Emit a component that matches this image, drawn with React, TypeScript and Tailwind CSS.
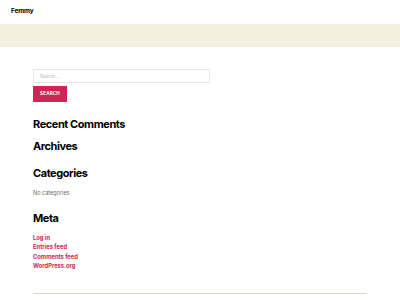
export default function App() {
  const links = ['Log in', 'Entries feed', 'Comments feed', 'WordPress.org'];
  return (
    <div className="flex h-[300px] w-[400px] flex-col overflow-hidden bg-white font-['Inter',sans-serif] text-black">
      <header className="flex h-[24px] items-center px-[11px]">
        <span className="text-[6.5px] font-bold tracking-[-0.02em] text-black">Femmy</span>
      </header>
      <div className="h-[23px] bg-[#f5efe0]" />

      <main className="flex flex-col px-[33px] pt-[22px]">
        <form className="flex flex-col gap-[3px]">
          <input
            placeholder="Search ..."
            className="h-[14px] w-[177px] border border-[#e6e6e6] px-[6px] text-[4.5px] text-[#999] outline-none placeholder:text-[#b0b0b0]"
          />
          <button
            type="button"
            className="h-[16px] w-[34px] bg-[#cd2653] text-[4.5px] font-bold uppercase tracking-[0.04em] text-white"
          >
            Search
          </button>
        </form>

        <h2 className="mt-[15px] text-[11px] font-bold leading-[15px] tracking-[-0.04em]">Recent Comments</h2>
        <h2 className="mt-[7px] text-[11px] font-bold leading-[15px] tracking-[-0.04em]">Archives</h2>
        <h2 className="mt-[12px] text-[11px] font-bold leading-[15px] tracking-[-0.04em]">Categories</h2>
        <p className="mt-[8px] text-[5.5px] leading-[8px] text-[#6d6d6d]">No categories</p>
        <h2 className="mt-[14px] text-[11px] font-bold leading-[15px] tracking-[-0.04em]">Meta</h2>
        <ul className="mt-[7px] flex flex-col">
          {links.map((l) => (
            <li key={l} className="text-[5.8px] font-bold leading-[9.3px] text-[#cd2653]">
              {l}
            </li>
          ))}
        </ul>
        <div className="mt-[23px] h-px w-[334px] bg-[#dcd7ca]" />
      </main>
    </div>
  );
}
